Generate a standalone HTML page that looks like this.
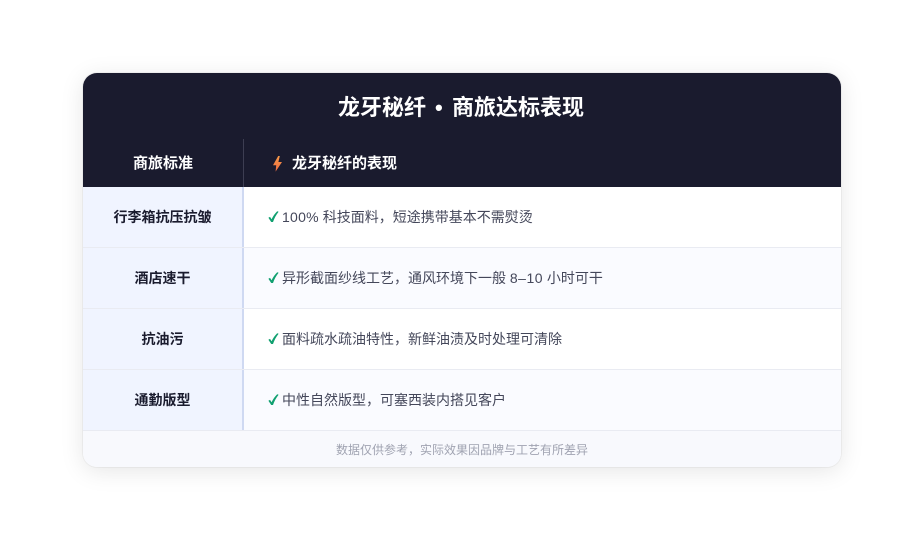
<!DOCTYPE html>
<html lang="zh"><head><meta charset="utf-8"><style>
*{box-sizing:border-box;margin:0;padding:0}
html,body{width:924px;height:540px;background:#fff;overflow:hidden;font-family:"Liberation Sans","Noto Sans CJK SC",sans-serif}
.card{position:absolute;left:83px;top:73px;width:758px;height:394px;border-radius:14px;overflow:hidden;background:#f8f9fd}
.shadow{position:absolute;left:83px;top:73px;width:758px;height:394px;border-radius:14px;box-shadow:0 4px 24px rgba(0,0,0,.10),0 0 0 1px rgba(0,0,0,.04)}
.title{position:absolute;left:0;top:0;width:758px;height:66px;background:#1a1b2e}
.title span{position:absolute;top:0;color:#fff;font-size:22px;font-weight:700;line-height:69px;white-space:nowrap;filter:blur(.3px)}
.hd{position:absolute;left:0;top:66px;width:758px;height:48px;background:#1a1b2e;color:#fff;font-size:15px;font-weight:700;line-height:50px}
.hd .a{position:absolute;left:0;width:160px;text-align:center;filter:blur(.3px)}
.hd .sep{position:absolute;left:160px;top:0;width:1px;height:48px;background:#3d3e52}
.hd .b{position:absolute;left:209px;filter:blur(.3px)}
.hd svg{position:absolute;left:190px;top:17px}
.row{position:absolute;left:0;width:758px;height:61px;border-bottom:1px solid #e9ebf2;background:#fff}
.row.alt{background:#fafbff}
.row .a{position:absolute;left:0;top:0;width:161px;height:60px;background:#f0f4ff;border-right:2px solid #cfd9f2;text-align:center;font-size:14px;font-weight:700;color:#1a1b2e;line-height:60px}
.row .b{position:absolute;left:199px;top:0;font-size:14px;color:#44475a;line-height:60px;white-space:nowrap;filter:blur(.25px)}
.row svg{position:absolute;left:185px;top:24px}
.ft{position:absolute;left:0;top:358px;width:758px;height:36px;text-align:center;font-size:12px;color:#a0a3b1;line-height:38px;filter:blur(.25px)}
</style></head><body>
<div class="shadow"></div>
<div class="card">
<div class="title"><span style="left:255px">龙牙秘纤</span><span style="left:352px">•</span><span style="left:369px">商旅达标表现</span></div>
<div class="hd"><div class="a">商旅标准</div><div class="sep"></div>
<svg width="9" height="16" viewBox="0 0 9 16"><defs><linearGradient id="g" x1="0" y1="0" x2="0" y2="1"><stop offset="0" stop-color="#f79a48"/><stop offset="1" stop-color="#ee6a42"/></linearGradient></defs><path d="M5.2 0 L0 9.2 H3.2 L2.6 15.6 L9 6 H5.4 L6.8 0 Z" fill="url(#g)"/></svg>
<div class="b">龙牙秘纤的表现</div></div>
<div class="row" style="top:114px"><div class="a">行李箱抗压抗皱</div><svg width="11" height="12" viewBox="0 0 11 12"><path d="M0.4 6.8 L2 5.9 L3.6 8.2 C5 5.2 7 2.4 9.2 0.3 L10.6 0.8 C8 4 6.2 7.5 5 11 H3.2 Z" fill="#10a070"/></svg><div class="b"><span style="letter-spacing:.25px">100%</span> 科技面料，短途携带基本不需熨烫</div></div>
<div class="row alt" style="top:175px"><div class="a">酒店速干</div><svg width="11" height="12" viewBox="0 0 11 12"><path d="M0.4 6.8 L2 5.9 L3.6 8.2 C5 5.2 7 2.4 9.2 0.3 L10.6 0.8 C8 4 6.2 7.5 5 11 H3.2 Z" fill="#10a070"/></svg><div class="b">异形截面纱线工艺，通风环境下一般 <span style="letter-spacing:.5px">8–10</span> 小时可干</div></div>
<div class="row" style="top:236px"><div class="a">抗油污</div><svg width="11" height="12" viewBox="0 0 11 12"><path d="M0.4 6.8 L2 5.9 L3.6 8.2 C5 5.2 7 2.4 9.2 0.3 L10.6 0.8 C8 4 6.2 7.5 5 11 H3.2 Z" fill="#10a070"/></svg><div class="b">面料疏水疏油特性，新鲜油渍及时处理可清除</div></div>
<div class="row alt" style="top:297px"><div class="a">通勤版型</div><svg width="11" height="12" viewBox="0 0 11 12"><path d="M0.4 6.8 L2 5.9 L3.6 8.2 C5 5.2 7 2.4 9.2 0.3 L10.6 0.8 C8 4 6.2 7.5 5 11 H3.2 Z" fill="#10a070"/></svg><div class="b">中性自然版型，可塞西装内搭见客户</div></div>
<div class="ft">数据仅供参考，实际效果因品牌与工艺有所差异</div>
</div>
</body></html>
